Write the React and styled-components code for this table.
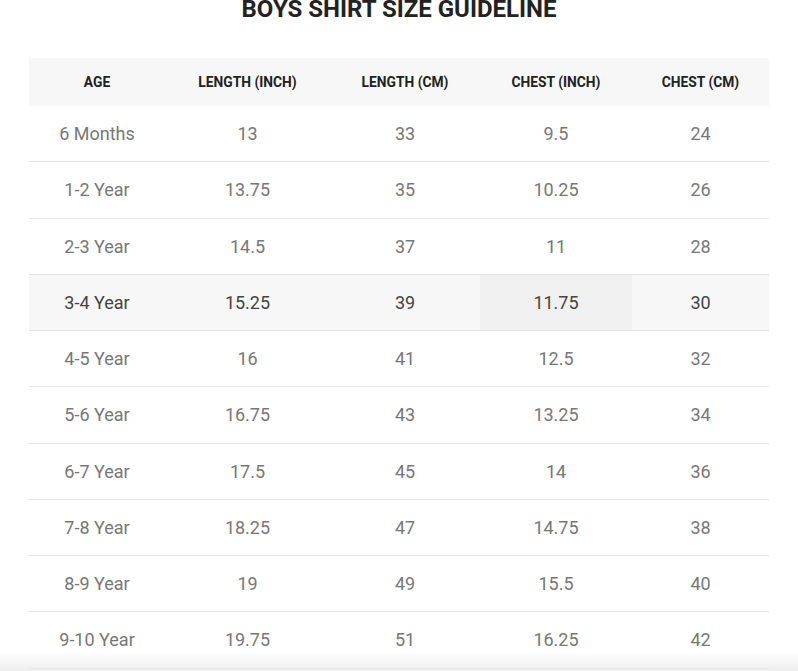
import React from 'react'
import styled, {createGlobalStyle} from 'styled-components'

const GlobalStyle = createGlobalStyle`
  html, body {
    margin: 0;
    padding: 0;
    background: #fff;
    font-family: Roboto, 'Noto Sans', Arial, sans-serif;
  }
`

const Page = styled.div`
  padding: 0 29px;
  overflow: hidden;
`

const Title = styled.h2`
  margin: -5px 0 35px;
  font-size: 24px;
  line-height: 28px;
  font-weight: 700;
  color: #222;
  text-align: center;
`

const Table = styled.table`
  width: 740px;
  border-collapse: collapse;
  table-layout: fixed;
`

const HeadCell = styled.th`
  height: 48px;
  padding: 0 6px;
  background: #f7f7f7;
  color: #222;
  font-size: 13.8px;
  font-weight: 700;
  text-align: center;
  text-transform: uppercase;
`

const Row = styled.tr`
  background: ${(p) => (p.active ? '#f7f7f7' : '#fff')};
  border-bottom: 1px solid #e4e4e4;
  color: ${(p) => (p.active ? '#444' : '#777')};
`

const Cell = styled.td`
  height: 55.25px;
  padding: 0 6px;
  font-size: 18px;
  text-align: center;
  background: ${(p) => (p.hover ? '#f0f0f0' : 'transparent')};
`

const BottomShade = styled.div`
  position: fixed;
  left: 0;
  right: 0;
  bottom: 0;
  height: 20px;
  background: linear-gradient(to bottom, rgba(240, 240, 240, 0), rgba(236, 236, 236, 0.9));
  pointer-events: none;
`

const columns = [
  {label: 'Age', width: 136},
  {label: 'Length (Inch)', width: 165},
  {label: 'Length (cm)', width: 150},
  {label: 'Chest (Inch)', width: 152},
  {label: 'Chest (cm)', width: 137},
]

const rows = [
  ['6 Months', '13', '33', '9.5', '24'],
  ['1-2 Year', '13.75', '35', '10.25', '26'],
  ['2-3 Year', '14.5', '37', '11', '28'],
  ['3-4 Year', '15.25', '39', '11.75', '30'],
  ['4-5 Year', '16', '41', '12.5', '32'],
  ['5-6 Year', '16.75', '43', '13.25', '34'],
  ['6-7 Year', '17.5', '45', '14', '36'],
  ['7-8 Year', '18.25', '47', '14.75', '38'],
  ['8-9 Year', '19', '49', '15.5', '40'],
  ['9-10 Year', '19.75', '51', '16.25', '42'],
]

const activeRow = 3
const activeCol = 3

export default function App() {
  return (
    <>
      <GlobalStyle />
      <Page>
        <Title>BOYS SHIRT SIZE GUIDELINE</Title>
        <Table>
          <colgroup>
            {columns.map((c) => (
              <col key={c.label} style={{width: c.width}} />
            ))}
          </colgroup>
          <thead>
            <tr>
              {columns.map((c) => (
                <HeadCell key={c.label}>{c.label}</HeadCell>
              ))}
            </tr>
          </thead>
          <tbody>
            {rows.map((r, i) => (
              <Row key={r[0]} active={i === activeRow}>
                {r.map((v, j) => (
                  <Cell key={j} hover={i === activeRow && j === activeCol}>
                    {v}
                  </Cell>
                ))}
              </Row>
            ))}
          </tbody>
        </Table>
      </Page>
      <BottomShade />
    </>
  )
}
